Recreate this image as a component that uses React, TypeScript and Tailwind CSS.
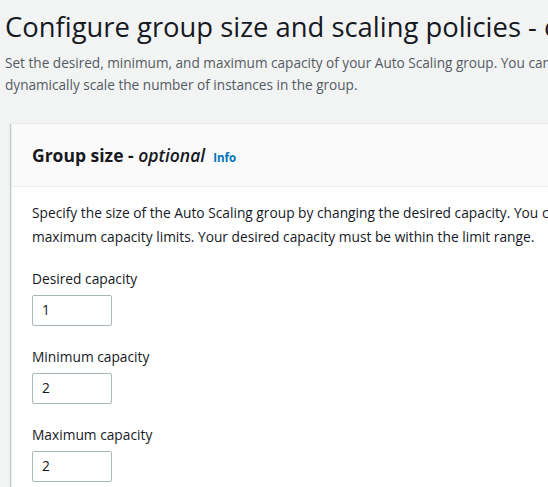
import React from "react";

const fields = [
  { label: "Desired capacity", value: "1" },
  { label: "Minimum capacity", value: "2" },
  { label: "Maximum capacity", value: "2" },
];

export default function App() {
  return (
    <div
      className="h-[487px] w-[548px] overflow-hidden bg-[#f2f3f3] text-[#16191f]"
      style={{ fontFamily: '"Open Sans", "Noto Sans", Arial, sans-serif' }}
    >
      <div className="w-[900px] pl-[5px] pt-[5px]">
        {/* Page header */}
        <h1 className="whitespace-nowrap text-[27.4px] leading-[44px] font-normal">
          Configure group size and scaling policies - optional
        </h1>
        <p className="mt-[3px] whitespace-nowrap text-[13.6px] leading-[22px] text-[#545b64]">
          Set the desired, minimum, and maximum capacity of your Auto Scaling group. You can optionally add a scaling policy to
          <br />
          dynamically scale the number of instances in the group.
        </p>

        {/* Card */}
        <div className="ml-[6px] mt-[27px] border-l border-t border-[#eaeded] bg-white pb-[20px] shadow-[0_1px_1px_0_rgba(0,28,36,0.3),1px_1px_1px_0_rgba(0,28,36,0.15),-1px_1px_1px_0_rgba(0,28,36,0.15)]">
          <div className="flex h-[63px] items-center border-b border-[#eaeded] bg-[#fafafa] px-[20px]">
            <div className="flex items-baseline gap-[8px]">
              <h2 className="text-[17.5px] font-bold leading-[22px]">
                Group size - <i className="font-semibold">optional</i>
              </h2>
              <span className="text-[11.5px] font-bold text-[#0073bb]">Info</span>
            </div>
          </div>

          <div className="px-[20px] pt-[14px]">
            <p className="whitespace-nowrap text-[13.75px] leading-[24px]">
              Specify the size of the Auto Scaling group by changing the desired capacity. You can also specify minimum and
              <br />
              maximum capacity limits. Your desired capacity must be within the limit range.
            </p>

            <div className="mt-[19px] flex flex-col gap-[20px]">
              {fields.map((f) => (
                <div key={f.label}>
                  <label className="block text-[13.75px] leading-[22px]">{f.label}</label>
                  <div className="mt-[5px] flex h-[31px] w-[80px] items-center rounded-[2px] border border-[#aab7b8] bg-white px-[9px] text-[13.75px]">
                    {f.value}
                  </div>
                </div>
              ))}
            </div>
          </div>
        </div>
      </div>
    </div>
  );
}
